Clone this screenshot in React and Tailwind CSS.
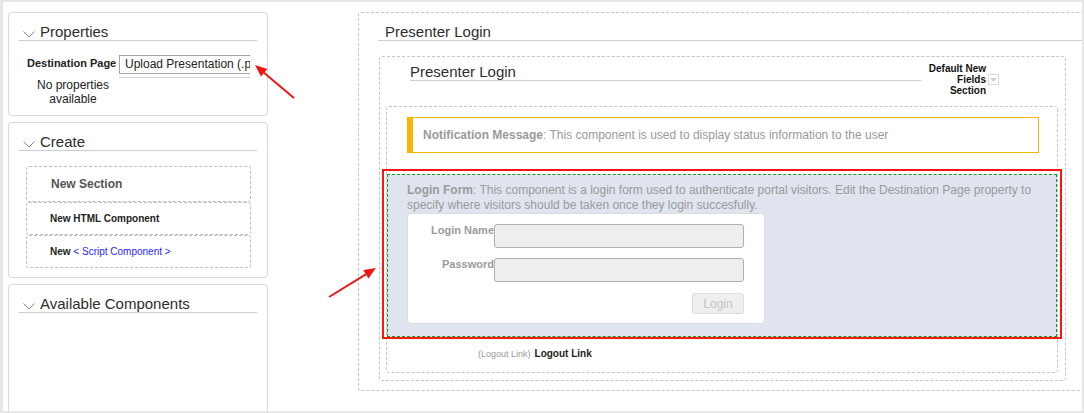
import React from "react";

const Chevron = () => (
  <svg width="12" height="7" viewBox="0 0 12 7" className="block">
    <path d="M0.5 0.5 L6 6 L11.5 0.5" fill="none" stroke="#8a8a8a" strokeWidth="1" />
  </svg>
);

function PanelHeader({ title }) {
  return (
    <div className="mx-[10px] mt-[10px] h-[18px] border-b border-[#c8d1da] flex items-end">
      <div className="ml-[4px] mb-[2px] w-[12px]">
        <Chevron />
      </div>
      <span className="ml-[5px] text-[15px] leading-[17px] text-[#2d2d2d]">{title}</span>
    </div>
  );
}

export default function App() {
  return (
    <div className="relative w-[1084px] h-[413px] overflow-hidden bg-white border-t-2 border-l-[3px] border-r-2 border-b-2 border-[#e6e6e6] font-[family-name:Liberation_Sans,Arial,sans-serif] flex items-start">
      {/* Left column */}
      <div className="ml-[5px] mt-[10px] w-[260px] shrink-0 flex flex-col gap-[6px]">
        <div className="h-[104px] border border-[#d5dce3] rounded-[4px] bg-white">
          <PanelHeader title="Properties" />
          <div className="ml-[18px] mt-[14px]">
            <div className="flex items-start">
              <div className="w-[92px] pt-[2px] text-[11px] font-bold leading-[13px] text-[#222] whitespace-nowrap">
                Destination Page
              </div>
              <div className="w-[131px] border-b border-[#d5d5d5] pb-[3px] overflow-hidden">
                <div className="w-[140px] h-[19px] border border-[#a5a5a5] pl-[5px] text-[12px] leading-[17px] text-[#222] whitespace-nowrap">
                  Upload Presentation (.p
                </div>
              </div>
            </div>
            <div className="w-[92px] text-center text-[12px] leading-[14px] text-[#222]">
              No properties
              <br />
              available
            </div>
          </div>
        </div>

        <div className="h-[156px] border border-[#d5dce3] rounded-[4px] bg-white">
          <PanelHeader title="Create" />
          <div className="ml-[17px] mt-[15px] w-[225px] flex flex-col">
            <div className="h-[36px] border border-dashed border-[#bdbdbd] rounded-[3px] flex items-center pl-[24px] text-[12px] font-bold text-[#555]">
              New Section
            </div>
            <div className="h-[33px] border border-dashed border-[#bdbdbd] rounded-[3px] flex items-center pl-[23px] text-[10px] font-bold text-[#222]">
              New HTML Component
            </div>
            <div className="h-[33px] border border-dashed border-[#bdbdbd] rounded-[3px] flex items-center pl-[23px] text-[10px] font-bold text-[#222] whitespace-pre">
              New <span className="font-normal text-[#1f1fff]">&lt; Script Component &gt;</span>
            </div>
          </div>
        </div>

        <div className="h-[140px] border border-[#d5dce3] rounded-[4px] bg-white">
          <PanelHeader title="Available Components" />
        </div>
      </div>

      {/* Right area */}
      <div className="ml-[90px] mt-[10px] w-[727px] h-[379px] shrink-0 border border-dashed border-[#c4c4c4] rounded-[3px]">
        <div className="ml-[19px] mt-[10px] h-[18px] border-b border-[#c8d1da] pl-[7px] text-[15px] leading-[17px] text-[#2d2d2d]">
          Presenter Login
        </div>

        <div className="ml-[20px] mt-[15px] w-[687px] h-[325px] border border-dashed border-[#c4c4c4] rounded-[3px]">
          <div className="h-[49px] pt-[7px] flex items-start">
            <div className="ml-[30px] w-[511px] h-[17px] border-b border-[#c8d1da] text-[15px] leading-[16px] text-[#2d2d2d]">
              Presenter Login
            </div>
            <div className="ml-[7px] -mt-[1px] flex items-center">
              <div className="w-[58px] text-right text-[10px] font-bold leading-[11px] text-[#111]">
                Default New
                <br />
                Fields
                <br />
                Section
              </div>
              <div className="ml-[2px] w-[11px] h-[11px] border border-[#d8d8d8] bg-white flex items-center justify-center">
                <svg width="7" height="4" viewBox="0 0 7 4" className="block">
                  <polygon points="0,0 7,0 3.5,4" fill="#cfcfcf" />
                </svg>
              </div>
            </div>
          </div>

          <div className="ml-[6px] w-[672px] h-[267px] border border-dashed border-[#c4c4c4] rounded-[3px]">
            <div className="ml-[20px] mt-[10px] w-[632px] h-[36px] border border-[#f7b500] border-l-[6px] flex items-center pl-[10px] text-[12px] text-[#9a9a9a]">
              <span className="font-bold">Notification Message</span>: This component is used to display status information to the user
            </div>

            <div className="mt-[21px] w-full h-[163px] border border-dashed border-[#1a9a1a] bg-[#dfe4ee] pt-[8px] px-[19px]">
              <div className="text-[12px] leading-[15px] text-[#9a9a9a]">
                <span className="font-bold">Login Form</span>: This component is a login form used to authenticate portal visitors. Edit the Destination Page property to specify where visitors should be taken once they login succesfully.
              </div>
              <div className="w-[358px] h-[111px] rounded-[4px] border border-[#d9dde2] bg-white pt-[10px]">
                <div className="flex items-start">
                  <div className="w-[86px] text-right text-[11px] font-bold leading-[13px] text-[#9a9a9a]">Login Name</div>
                  <div className="w-[250px] h-[24px] rounded-[3px] border border-[#aab0b7] bg-[#eeeeee]" />
                </div>
                <div className="mt-[10px] flex items-start">
                  <div className="w-[86px] text-right text-[11px] font-bold leading-[13px] text-[#9a9a9a]">Password</div>
                  <div className="w-[250px] h-[24px] rounded-[3px] border border-[#aab0b7] bg-[#eeeeee]" />
                </div>
                <div className="mt-[11px] w-[336px] flex justify-end">
                  <div className="w-[52px] h-[21px] rounded-[3px] border border-[#dcdcdc] bg-[#efefef] flex items-center justify-center text-[12px] text-[#c4c4c4]">
                    Login
                  </div>
                </div>
              </div>
            </div>

            <div className="ml-[91px] mt-[11px] flex items-baseline leading-[12px]">
              <span className="text-[9px] text-[#9a9a9a]">(Logout Link)</span>
              <span className="ml-[4px] text-[10px] font-bold text-[#222]">Logout Link</span>
            </div>
          </div>
        </div>
      </div>

      {/* Annotation overlay */}
      <svg className="absolute left-[-3px] top-[-2px] pointer-events-none" width="1084" height="413">
        <rect x="383" y="170" width="678" height="168" fill="none" stroke="#ff1414" strokeWidth="2" />
        <line x1="294" y1="98" x2="264" y2="72.8" stroke="#ee1515" strokeWidth="2" />
        <polygon points="255,65 267.4,69 261,76.6" fill="#ee1515" />
        <line x1="329" y1="297" x2="365.8" y2="274.3" stroke="#ee1515" strokeWidth="2" />
        <polygon points="376,268 368.4,278.6 363.2,270" fill="#ee1515" />
      </svg>
    </div>
  );
}
